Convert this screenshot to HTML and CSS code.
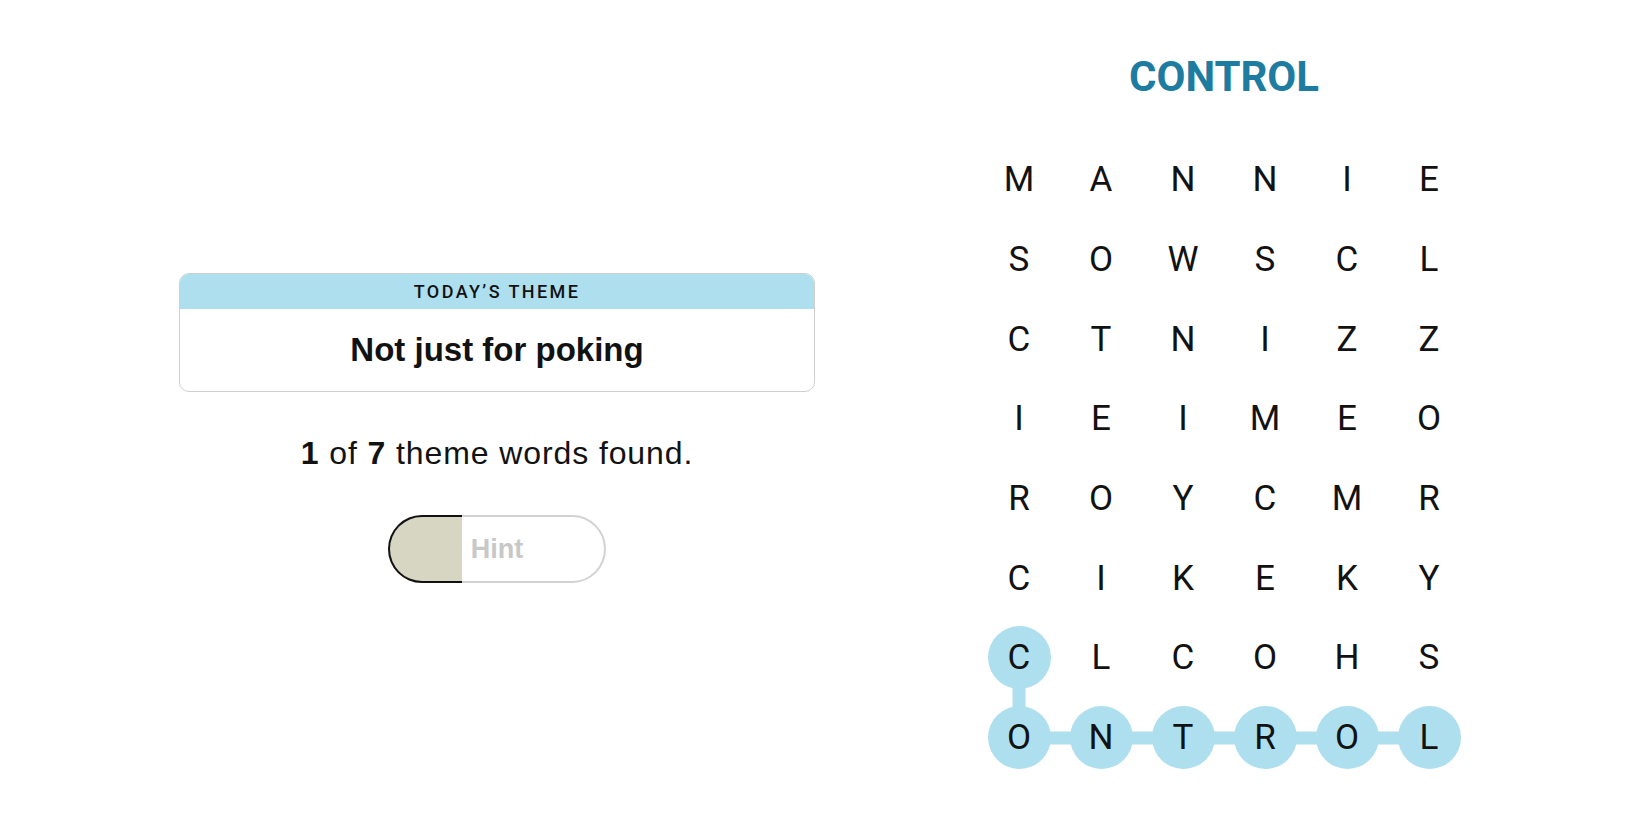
FILE: index.html
```html
<!DOCTYPE html>
<html lang="en">
<head>
<meta charset="utf-8">
<title>Strands</title>
<link rel="stylesheet" href="styles.css">
</head>
<body>
<main class="page">
  <section class="left">
    <div class="theme-card">
      <div class="theme-header">TODAY’S THEME</div>
      <div class="theme-body">Not just for poking</div>
    </div>
    <p class="count"><b>1</b> of <b>7</b> theme words found.</p>
    <button class="hint" type="button">
      <span class="hint-fill"></span>
      <span class="hint-label">Hint</span>
    </button>
  </section>
  <section class="right">
    <h1 class="word">CONTROL</h1>
    <div class="board">
      <svg class="links" width="492" height="638" viewBox="0 0 492 638" aria-hidden="true">
        <polyline points="41,518 41,598 123,598 205,598 287,598 369,598 451,598" fill="none" stroke="#aedfee" stroke-width="13" stroke-linejoin="round"/>
      </svg>
      <div class="grid">
        <span class="cell">M</span><span class="cell">A</span><span class="cell">N</span><span class="cell">N</span><span class="cell">I</span><span class="cell">E</span>
        <span class="cell">S</span><span class="cell">O</span><span class="cell">W</span><span class="cell">S</span><span class="cell">C</span><span class="cell">L</span>
        <span class="cell">C</span><span class="cell">T</span><span class="cell">N</span><span class="cell">I</span><span class="cell">Z</span><span class="cell">Z</span>
        <span class="cell">I</span><span class="cell">E</span><span class="cell">I</span><span class="cell">M</span><span class="cell">E</span><span class="cell">O</span>
        <span class="cell">R</span><span class="cell">O</span><span class="cell">Y</span><span class="cell">C</span><span class="cell">M</span><span class="cell">R</span>
        <span class="cell">C</span><span class="cell">I</span><span class="cell">K</span><span class="cell">E</span><span class="cell">K</span><span class="cell">Y</span>
        <span class="cell found">C</span><span class="cell">L</span><span class="cell">C</span><span class="cell">O</span><span class="cell">H</span><span class="cell">S</span>
        <span class="cell found">O</span><span class="cell found">N</span><span class="cell found">T</span><span class="cell found">R</span><span class="cell found">O</span><span class="cell found">L</span>
      </div>
    </div>
  </section>
</main>
</body>
</html>
```

FILE: styles.css
```css
* { box-sizing: border-box; }

html, body {
  margin: 0;
  background: #ffffff;
  color: #121212;
  font-family: "Liberation Sans", Arial, sans-serif;
}

.page {
  display: flex;
  height: 825px;
  overflow: hidden;
}

.left {
  width: 636px;
  margin-left: 179px;
  padding-top: 273px;
  display: flex;
  flex-direction: column;
  align-items: center;
}

.theme-card {
  width: 636px;
  border: 1px solid #cfcfcf;
  border-radius: 10px;
  overflow: hidden;
}

.theme-header {
  height: 35px;
  background: #aedfee;
  display: flex;
  align-items: center;
  justify-content: center;
  font-family: Roboto, "Liberation Sans", sans-serif;
  font-weight: 500;
  font-size: 18px;
  letter-spacing: 2.4px;
  color: #121212;
}

.theme-body {
  height: 82px;
  display: flex;
  align-items: center;
  justify-content: center;
  font-weight: 700;
  font-size: 33px;
  color: #121212;
}

.count {
  margin: 43px 0 0;
  font-size: 32px;
  line-height: 36px;
  letter-spacing: 0.9px;
  color: #121212;
}

.count b { font-weight: 700; }

.hint {
  position: relative;
  margin-top: 44px;
  width: 218px;
  height: 68px;
  border: 2px solid #d2d2d2;
  border-radius: 34px;
  background: #ffffff;
  padding: 0;
  display: flex;
  align-items: center;
  justify-content: center;
  font-family: "Liberation Sans", Arial, sans-serif;
  cursor: default;
}

.hint-fill {
  position: absolute;
  left: -2px;
  top: -2px;
  bottom: -2px;
  width: 74px;
  background: #d7d6c3;
  border: 2px solid #121212;
  border-right: none;
  border-radius: 34px 0 0 34px;
}

.hint-label {
  position: relative;
  font-weight: 700;
  font-size: 27px;
  color: #c8c8c8;
}

.right {
  width: 492px;
  margin-left: 163px;
  padding-top: 52px;
  display: flex;
  flex-direction: column;
  align-items: center;
}

.word {
  margin: 0;
  font-family: Roboto, "Liberation Sans", sans-serif;
  font-weight: 700;
  font-size: 42px;
  line-height: 50px;
  color: #1d7c9f;
}

.board {
  position: relative;
  margin-top: 38px;
  width: 492px;
  height: 638px;
}

.links {
  position: absolute;
  left: 0;
  top: 0;
}

.grid {
  position: relative;
  display: grid;
  grid-template-columns: repeat(6, 82px);
  grid-template-rows: repeat(8, 79.7px);
  justify-items: center;
  align-items: center;
}

.cell {
  width: 63px;
  height: 63px;
  border-radius: 50%;
  display: flex;
  align-items: center;
  justify-content: center;
  font-family: Roboto, "Liberation Sans", sans-serif;
  font-size: 35px;
  font-weight: 400;
  color: #121212;
}

.cell.found {
  background: #aedfee;
}
```
